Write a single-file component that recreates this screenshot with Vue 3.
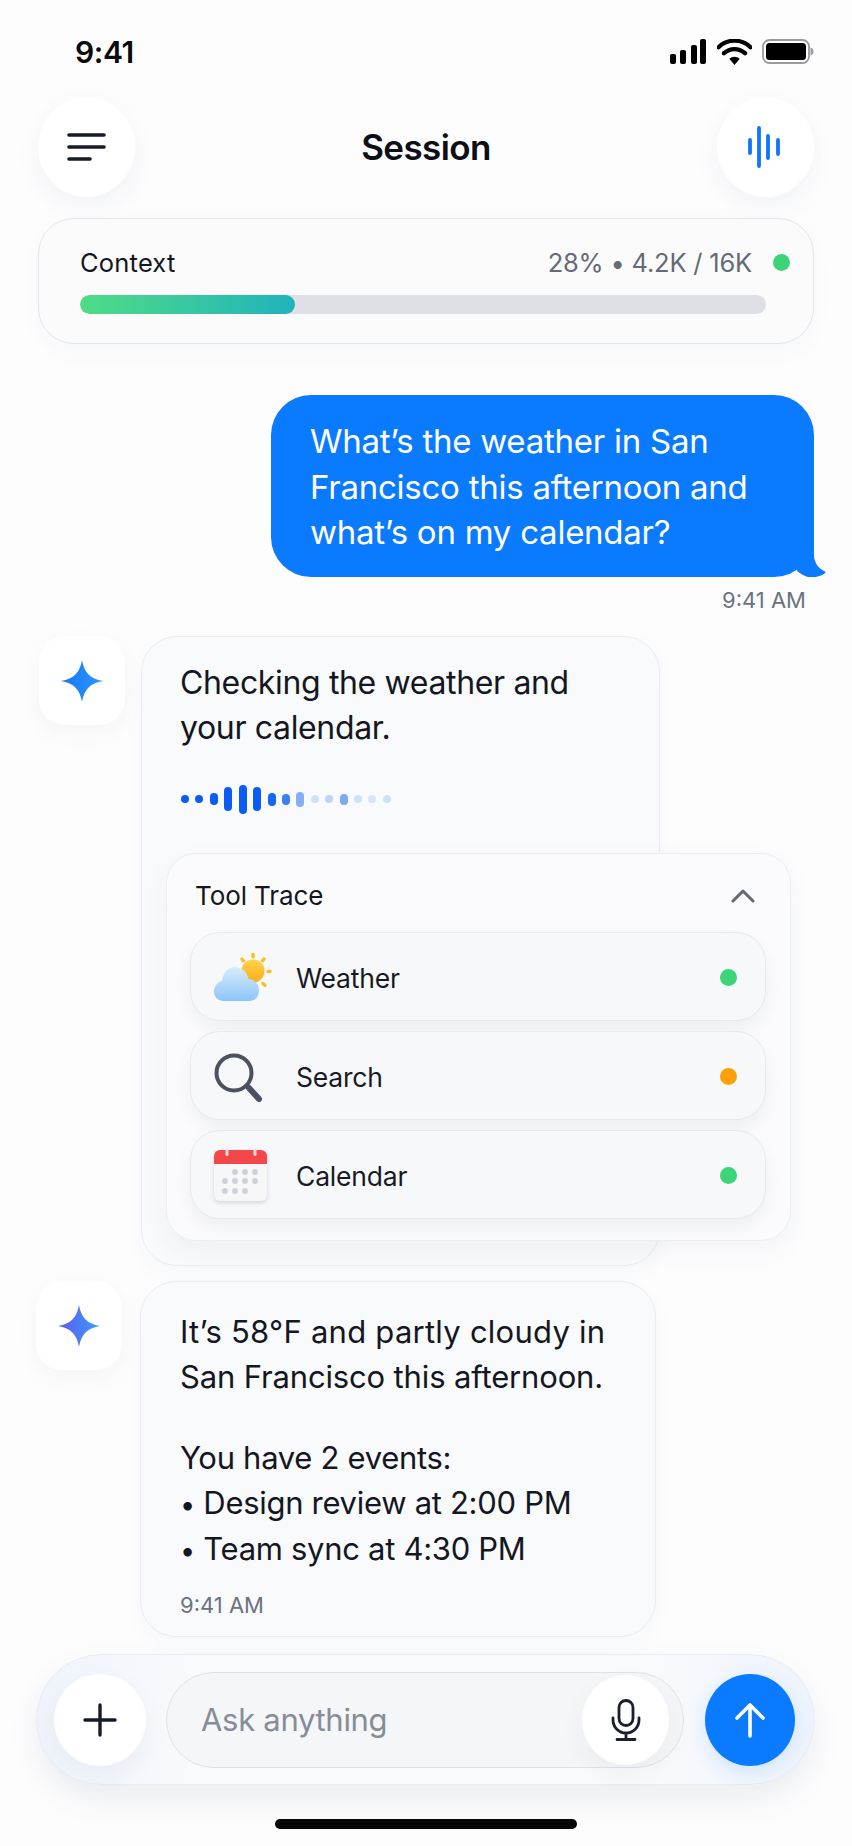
<template>
  <div class="screen">
    <div class="status">
      <span class="clock">9:41</span>
      <div class="status-icons">
        <svg width="37" height="25" viewBox="0 0 37 25"><rect x="0" y="15" width="6" height="10" rx="2"/><rect x="10" y="11" width="6" height="14" rx="2"/><rect x="21" y="6" width="6" height="19" rx="2"/><rect x="30" y="0" width="6" height="25" rx="2"/></svg>
        <svg width="35" height="26" viewBox="0 0 35 26"><path d="M17.5 26l-5.2-6.2a7.5 7.5 0 0 1 10.4 0z"/><path d="M1.5 8.2a23 23 0 0 1 32 0M7 14.2a15.500 15.500 0 0 1 21 0" fill="none" stroke="#000" stroke-width="4.300" stroke-linecap="round"/></svg>
        <svg width="52" height="25" viewBox="0 0 52 25"><rect x="1" y="1" width="46" height="23" rx="6.500" fill="none" stroke="#9a9a9e" stroke-width="1.800"/><rect x="4" y="4" width="40" height="17" rx="3.500"/><path d="M48.500 8.500c2 .4 3 2 3 4s-1 3.600-3 4z" fill="#9a9a9e"/></svg>
      </div>
    </div>

    <header class="topbar">
      <button class="round-btn">
        <svg width="40" height="30" viewBox="0 0 40 30" fill="none" stroke="#171a28" stroke-width="3.600" stroke-linecap="round"><path d="M2 3h35M2 15h35M2 27h21"/></svg>
      </button>
      <h1>Session</h1>
      <button class="round-btn">
        <svg width="36" height="42" viewBox="0 0 36 42" fill="none" stroke="#0f75fb" stroke-width="3.800" stroke-linecap="round"><path d="M3 14v13M12 2v38M21 10v22M31 14v14"/></svg>
      </button>
    </header>

    <section class="context">
      <div class="context-top">
        <span class="context-label">Context</span>
        <span class="context-stats">28% • 4.2K / 16K</span>
        <i class="dot green"></i>
      </div>
      <div class="track"><div class="fill"></div></div>
    </section>

    <section class="user-msg">
      <div class="user-bubble">
        What’s the weather in San<br />Francisco this afternoon and<br />what’s on my calendar?
        <svg class="tail" width="40" height="40" viewBox="0 0 40 40"><path d="M27 0v18c0 8 5 14 12 17-3 4-11 6-18 5-4-1-8-4-11-6V0z" fill="#0a7aff"/></svg>
      </div>
      <div class="user-time">9:41 AM</div>
    </section>

    <section class="bot-row first">
      <div class="avatar">
        <svg width="44" height="44" viewBox="0 0 44 44"><defs><linearGradient id="starA" x1="0" y1="0" x2="1" y2="0"><stop offset="0" stop-color="#1577f6"/><stop offset="1" stop-color="#2f96ff"/></linearGradient></defs><path d="M22 1c2 12 8 19 21 21-13 2-19 9-21 21-2-12-8-19-21-21 13-2 19-9 21-21z" fill="url(#starA)"/></svg>
      </div>
      <div class="bot-bubble checking">
        <p class="bot-text wide">Checking the weather and<br />your calendar.</p>
        <div class="wave">
          <i v-for="(b, n) in waveBars" :key="n" :style="{ height: b.h + 'px', background: b.c }"></i>
        </div>
        <div class="trace">
          <div class="trace-head">
            <span>Tool Trace</span>
            <svg width="24" height="15" viewBox="0 0 24 15" fill="none" stroke="#636875" stroke-width="3" stroke-linecap="round" stroke-linejoin="round"><path d="M2 13L12 3l10 10"/></svg>
          </div>
          <div class="tools">
            <div class="tool" v-for="t in tools" :key="t.name">
              <svg v-if="t.name === 'Weather'" width="60" height="60" viewBox="0 0 60 60">
                <defs>
                  <linearGradient id="sunG" x1="0" y1="0" x2="0" y2="1"><stop offset="0" stop-color="#ffd34d"/><stop offset="1" stop-color="#f9ae17"/></linearGradient>
                  <linearGradient id="cloudG" x1="0" y1="0" x2="0" y2="1"><stop offset="0" stop-color="#d8ecfd"/><stop offset="1" stop-color="#8cc5fa"/></linearGradient>
                </defs>
                <g stroke="#fbbf24" stroke-width="3.400" stroke-linecap="round"><path d="M41 6.500v2.500M30 11l1.500 1.800M52 11l-1.500 1.800M56 23.500h2M51 35.500l1.800 1.800"/></g>
                <circle cx="41" cy="23" r="11.500" fill="url(#sunG)"/>
                <path d="M12 53C5.500 53 2 48.500 2 43.500 2 38 6 33.500 10 33c1-8 6-14 13-14s12 5 13.500 12C42.500 31.500 47 36 47 42.500 47 48.500 43 53 37 53z" fill="url(#cloudG)"/>
              </svg>
              <svg v-else-if="t.name === 'Search'" width="60" height="60" viewBox="0 0 60 60" fill="none" stroke="#4c5161">
                <circle cx="22" cy="26" r="17.500" stroke-width="4"/>
                <path d="M35 39l2 2" stroke-width="3"/>
                <path d="M37 41l10 11" stroke-width="6" stroke-linecap="round"/>
              </svg>
              <svg v-else class="cal" width="60" height="60" viewBox="0 0 60 60">
                <rect x="2" y="4" width="53" height="51" rx="6" fill="#f7f7f8"/>
                <path d="M2 18v-8a6 6 0 0 1 6-6h41a6 6 0 0 1 6 6v8z" fill="#f4474a"/>
                <rect x="13.500" y="3" width="3" height="7" rx="1.500" fill="#e8dcdc"/>
                <rect x="41.500" y="3" width="3" height="7" rx="1.500" fill="#e8dcdc"/>
                <g fill="#cdd1d9">
                  <circle v-for="(p, n) in calDots" :key="n" :cx="p[0]" :cy="p[1]" r="2.900"/>
                </g>
              </svg>
              <span class="tool-name">{{ t.name }}</span>
              <i class="dot" :class="t.state"></i>
            </div>
          </div>
        </div>
      </div>
    </section>

    <section class="bot-row second">
      <div class="avatar">
        <svg width="44" height="44" viewBox="0 0 44 44"><defs><linearGradient id="starB" x1="0" y1="0" x2="1" y2="0"><stop offset="0" stop-color="#6159ee"/><stop offset="1" stop-color="#3a9dfd"/></linearGradient></defs><path d="M22 1c2 12 8 19 21 21-13 2-19 9-21 21-2-12-8-19-21-21 13-2 19-9 21-21z" fill="url(#starB)"/></svg>
      </div>
      <div class="bot-bubble answer">
        <p class="bot-text"><span class="loose">It’s 58°F and partly cloudy in</span><br /><span class="mid">San Francisco this afternoon.</span></p>
        <p class="bot-text events">You have 2 events:<br /><span class="bullet">•</span> Design review at 2:00 PM<br /><span class="bullet">•</span> Team sync at 4:30 PM</p>
        <div class="bot-time">9:41 AM</div>
      </div>
    </section>

    <footer class="composer">
      <button class="round-btn plus">
        <svg width="34" height="34" viewBox="0 0 34 34" fill="none" stroke="#171a28" stroke-width="3.400" stroke-linecap="round"><path d="M17 2v30M2 17h30"/></svg>
      </button>
      <div class="field">
        <span class="placeholder">Ask anything</span>
        <button class="round-btn mic">
          <svg width="30" height="42" viewBox="0 0 30 42" fill="none" stroke="#1b1e2c" stroke-width="2.800" stroke-linecap="round"><rect x="8" y="1.500" width="14" height="25" rx="7"/><path d="M2 19v2a13 13 0 0 0 26 0v-2M15 34v6M6 40.500h18"/></svg>
        </button>
      </div>
      <button class="round-btn send">
        <svg width="32" height="36" viewBox="0 0 32 36" fill="none" stroke="#fff" stroke-width="3.600" stroke-linecap="round" stroke-linejoin="round"><path d="M16 34V3M3 16L16 3l13 13"/></svg>
      </button>
    </footer>

    <div class="home-bar"></div>
  </div>
</template>

<script setup>
const strong = '#0b5cf5'
const pale = '#cfe0fb'

const waveBars = [
  { h: 8, c: strong }, { h: 8, c: strong }, { h: 12, c: strong }, { h: 24, c: strong },
  { h: 29, c: strong }, { h: 24, c: strong }, { h: 13, c: '#1567f5' }, { h: 11, c: '#3b7ff0' },
  { h: 15, c: '#86aef5' }, { h: 8, c: pale }, { h: 8, c: '#bcd3fa' }, { h: 11, c: '#7ea7ee' },
  { h: 8, c: pale }, { h: 8, c: '#d8e6fc' }, { h: 8, c: pale }
]

const tools = [
  { name: 'Weather', state: 'green' },
  { name: 'Search', state: 'orange' },
  { name: 'Calendar', state: 'green' }
]

const calDots = [
  [23, 26], [33, 26], [43, 26],
  [13, 35], [23, 35], [33, 35], [43, 35],
  [13, 45], [23, 45], [33, 45]
]
</script>

<style>
html, body { background: #fdfdfe; }
</style>

<style scoped>
.screen {
  width: 852px;
  height: 1846px;
  overflow: hidden;
  display: flex;
  flex-direction: column;
  background: #fdfdfe;
  color: #11141f;
  font-family: Inter, "Noto Sans", sans-serif;
}
.status {
  height: 97px;
  flex: none;
  box-sizing: border-box;
  padding: 37px 38px 0 75px;
  display: flex;
  justify-content: space-between;
  align-items: flex-start;
}
.clock { font-size: 30px; font-weight: 600; line-height: 30px; letter-spacing: -0.4px; color: #0a0a0c; }
.status-icons { display: flex; align-items: flex-start; gap: 10px; margin-top: 2px; }
.topbar {
  height: 100px;
  flex: none;
  padding: 0 38px;
  display: flex;
  align-items: center;
  justify-content: space-between;
}
.topbar h1 { margin: 0; font-size: 35px; font-weight: 600; letter-spacing: -0.6px; color: #0d0f17; }
.round-btn {
  width: 97px;
  height: 100px;
  padding: 0;
  flex: none;
  border: 0;
  border-radius: 50%;
  background: #fff;
  display: flex;
  align-items: center;
  justify-content: center;
  box-shadow: 0 10px 26px rgba(40, 50, 80, 0.05);
}
.context {
  flex: none;
  margin: 21px 38px 0 38px;
  height: 126px;
  box-sizing: border-box;
  padding: 26px 23px 0 41px;
  border: 1.500px solid #e3e5ea;
  border-radius: 36px;
  background: #fbfbfc;
  box-shadow: 0 8px 22px rgba(40, 50, 80, 0.03);
}
.context-top { display: flex; align-items: center; height: 34px; }
.context-label { font-size: 25.500px; letter-spacing: 0.2px; color: #14161f; }
.context-stats { margin-left: auto; font-size: 25.500px; letter-spacing: -0.2px; color: #646a78; }
.dot { display: block; width: 17px; height: 17px; border-radius: 50%; flex: none; }
.dot.green { background: #3dd479; }
.dot.orange { background: #ff9f0a; }
.context-top .dot { margin-left: 21px; }
.track { margin-top: 16px; margin-right: 24px; height: 19px; border-radius: 10px; background: #dfe0e5; overflow: hidden; }
.fill { width: 215px; height: 100%; border-radius: 10px; background: linear-gradient(90deg, #50dc85, #20b3bc); }
.user-msg { flex: none; margin: 51px 38px 0 0; display: flex; flex-direction: column; align-items: flex-end; }
.user-bubble {
  position: relative;
  width: 543px;
  height: 182px;
  box-sizing: border-box;
  padding: 24px 0 0 39px;
  border-radius: 40px;
  background: #0a7aff;
  color: #fff;
  font-size: 33px;
  line-height: 45.500px;
  letter-spacing: -0.25px;
}
.tail { position: absolute; right: -13px; bottom: 0; }
.user-time { margin: 10px 8px 0 0; font-size: 22px; line-height: 26px; color: #6b7280; }
.bot-row { flex: none; display: flex; align-items: flex-start; }
.bot-row.first { margin: 23px 0 0 39px; gap: 16px; }
.bot-row.second { margin: 15px 0 0 36px; gap: 18px; }
.avatar {
  width: 86px;
  height: 89px;
  flex: none;
  border-radius: 26px;
  background: #fff;
  display: flex;
  align-items: center;
  justify-content: center;
  box-shadow: 0 8px 22px rgba(40, 50, 80, 0.04);
}
.bot-bubble {
  box-sizing: border-box;
  border: 1.500px solid #e9ecf4;
  border-radius: 36px;
  background: #f9fafc;
  box-shadow: 0 8px 22px rgba(40, 50, 80, 0.03);
}
.checking { width: 519px; height: 630px; padding: 23px 0 0 38px; }
.answer { width: 516px; height: 356px; padding: 28px 0 0 39px; }
.bot-text { margin: 0; font-size: 31px; line-height: 44.500px; letter-spacing: -0.3px; color: #141722; }
.bot-text.wide { font-size: 32px; line-height: 45px; letter-spacing: -0.35px; }
.loose { letter-spacing: 0.25px; }
.mid { letter-spacing: -0.15px; }
.bullet { font-size: 27px; }
.events { margin-top: 37px; }
.bot-time { margin-top: 18px; font-size: 22px; line-height: 26px; color: #6b7280; }
.wave { margin-top: 34px; height: 30px; width: 210px; margin-left: 1px; display: flex; align-items: center; justify-content: space-between; }
.wave i { display: block; width: 8px; border-radius: 4px; }
.trace {
  position: relative;
  width: 625px;
  height: 388px;
  margin: 39px 0 0 -14px;
  box-sizing: border-box;
  padding: 0 24px 0 23px;
  border: 1.500px solid #eceef3;
  border-radius: 30px;
  background: #fbfbfd;
  box-shadow: 0 10px 26px rgba(40, 50, 80, 0.05);
}
.trace-head { height: 78px; padding: 4px 11px 0 5px; box-sizing: border-box; display: flex; align-items: center; justify-content: space-between; font-size: 26px; letter-spacing: -0.1px; color: #14161f; }
.tools { display: flex; flex-direction: column; gap: 10px; }
.tool {
  height: 89px;
  box-sizing: border-box;
  padding: 2px 28px 0 21px;
  display: flex;
  align-items: center;
  gap: 24px;
  border: 1.500px solid #e7e9ee;
  border-radius: 30px;
  background: #f7f8fa;
  box-shadow: 0 8px 16px rgba(40, 50, 80, 0.06);
}
.cal { filter: drop-shadow(0 2px 2px rgba(40, 50, 80, 0.16)); }
.tool-name { flex: 1; font-size: 26.500px; letter-spacing: -0.2px; color: #171a25; }
.composer {
  flex: none;
  margin: 17px 37px 0 36px;
  height: 131px;
  box-sizing: border-box;
  padding: 0 22px 0 17px;
  display: flex;
  align-items: center;
  border: 1.500px solid #e8ebf1;
  border-radius: 66px;
  background: linear-gradient(90deg, #eff4fc 0%, #f9fafc 22%, #f9fafc 78%, #eef4fd 100%);
  box-shadow: 0 14px 30px rgba(40, 50, 80, 0.08);
}
.plus { width: 92px; height: 92px; }
.field {
  width: 518px;
  height: 96px;
  margin: 0 21px 0 20px;
  flex: none;
  box-sizing: border-box;
  padding: 0 14px 0 34px;
  display: flex;
  align-items: center;
  justify-content: space-between;
  border: 1.500px solid #dfe2e8;
  border-radius: 48px;
  background: #f5f6f8;
}
.placeholder { font-size: 31px; letter-spacing: -0.3px; color: #878c99; }
.mic { width: 87px; height: 90px; }
.send { width: 90px; height: 92px; background: #0a7aff; box-shadow: 0 6px 20px rgba(10, 122, 255, 0.14); }
.home-bar { flex: none; width: 302px; height: 10px; margin: 34px auto 0; border-radius: 5px; background: #060606; }
</style>
